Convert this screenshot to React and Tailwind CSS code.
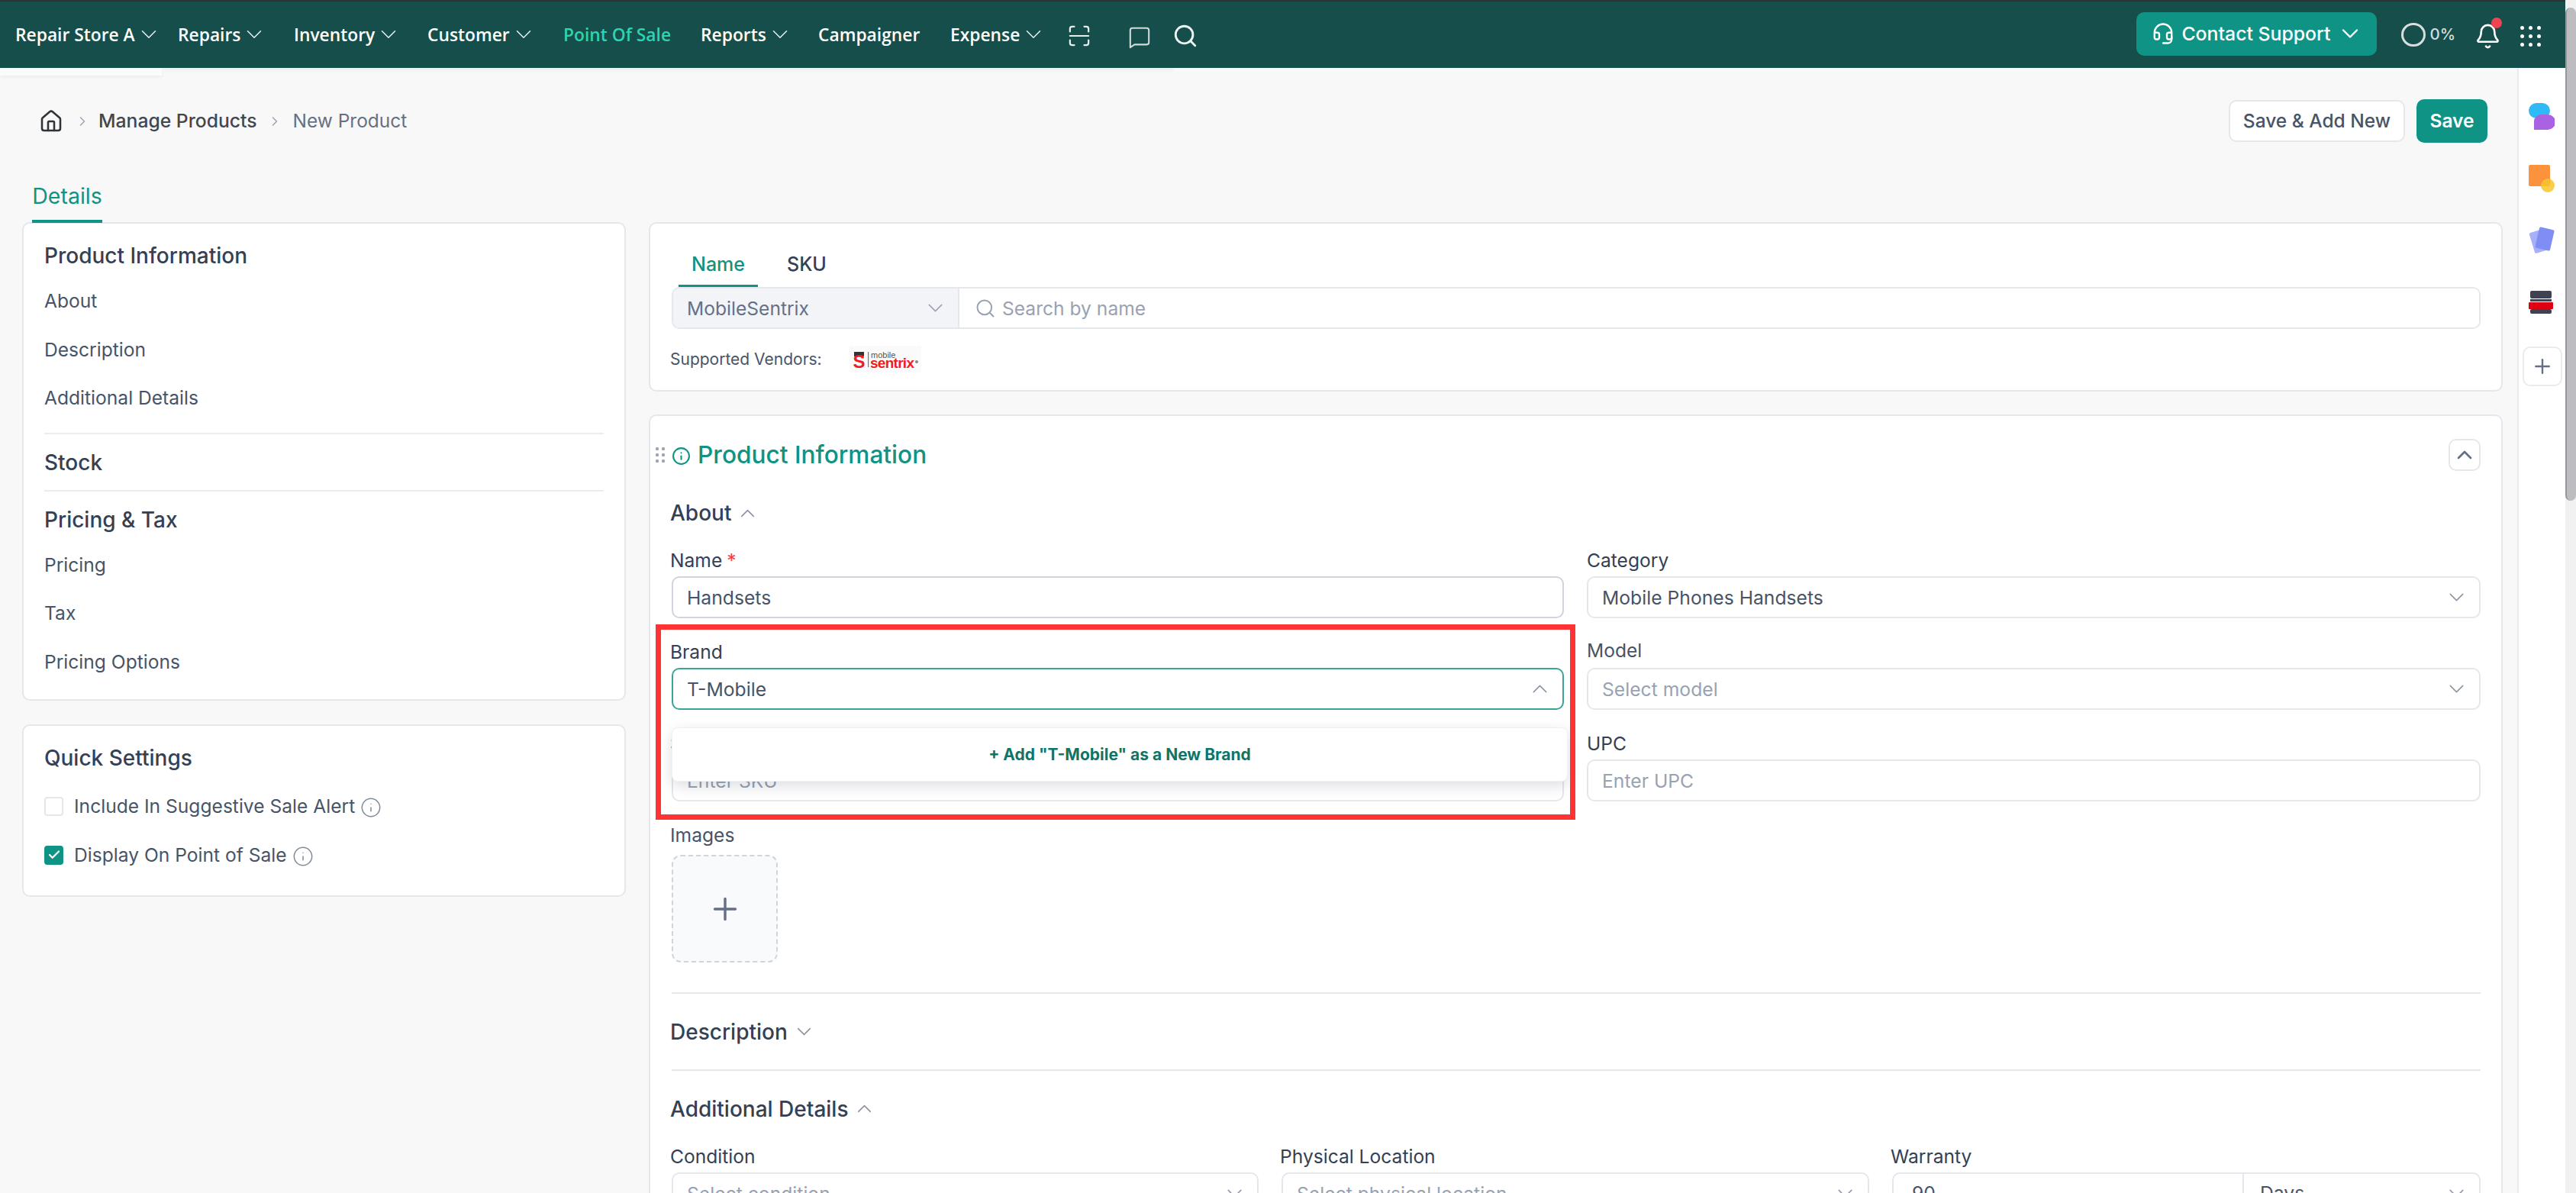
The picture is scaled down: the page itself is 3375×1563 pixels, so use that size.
import React from "react";
import { ChevronDown, ChevronUp, ChevronRight, Search, Bell, Headset, Info, Plus, Check, House } from "lucide-react";

const navItems = [
  { t: "Repair Store A", w: "w-[213px]", c: "text-white", chev: true },
  { t: "Repairs", w: "w-[152px]", c: "text-white", chev: true },
  { t: "Inventory", w: "w-[175px]", c: "text-white", chev: true },
  { t: "Customer", w: "w-[178px]", c: "text-white", chev: true },
  { t: "Point Of Sale", w: "w-[180px]", c: "text-[#2dd4b0]", chev: false },
  { t: "Reports", w: "w-[154px]", c: "text-white", chev: true },
  { t: "Campaigner", w: "w-[173px]", c: "text-white", chev: false },
  { t: "Expense", w: "w-[155px]", c: "text-white", chev: true },
];

function Nav() {
  return (
    <div className="h-[89px] bg-[#154e4b] border-t-2 border-[#2f3433] flex items-center pl-[20px] pr-[32px] shrink-0">
      {navItems.map((n) => (
        <div key={n.t} className={`${n.w} flex items-center shrink-0 mt-[2px]`}>
          <span className={`${n.c} text-[22.8px] font-semibold leading-none [font-family:'Open_Sans',sans-serif]`}>{n.t}</span>
          {n.chev && <ChevronDown className="ml-[1px] text-[#e5efee] -my-[8px] -mt-[10px] shrink-0" size={34} strokeWidth={1.1} />}
        </div>
      ))}
      <svg width="28" height="28" viewBox="0 0 30 30" fill="none" stroke="#e6eeed" strokeWidth="2.4" strokeLinecap="round" className="shrink-0 mt-[3px]">
        <path d="M2 9V5a3 3 0 0 1 3-3h3M22 2h3a3 3 0 0 1 3 3v4M28 21v4a3 3 0 0 1-3 3h-3M8 28H5a3 3 0 0 1-3-3v-4M2 15h26" />
      </svg>
      <svg width="30" height="30" viewBox="0 0 32 32" fill="none" stroke="#cfdcda" strokeWidth="2.2" strokeLinejoin="round" className="ml-[50px] shrink-0 mt-[7px]">
        <path d="M3 6a3 3 0 0 1 3-3h20a3 3 0 0 1 3 3v17a3 3 0 0 1-3 3H9l-6 4z" />
      </svg>
      <Search className="ml-[28px] text-[#eef4f3] mt-[3px] shrink-0" size={34} strokeWidth={2} />
      <div className="ml-auto flex items-center">
        <div className="w-[315px] h-[57px] rounded-[10px] bg-[#0e9384] flex items-center pl-[20px] -mt-[3px]">
          <Headset size={30} strokeWidth={1.9} className="text-white shrink-0" />
          <span className="ml-[9px] text-[24.8px] font-medium text-white leading-none">Contact Support</span>
          <ChevronDown size={36} strokeWidth={1.6} className="ml-[7px] text-white shrink-0" />
        </div>
        <div className="ml-[32px] w-[32px] h-[31px] rounded-full border-[3px] border-[#d8dedd]" />
        <span className="ml-[5px] text-[20.5px] font-medium text-[#d4dedc] leading-none -mt-[1px]">0%</span>
        <div className="ml-[25px] relative mt-[4px]">
          <Bell size={35} strokeWidth={1.8} className="text-white" />
          <div className="absolute -top-[7px] -right-[1px] w-[14px] h-[14px] rounded-full bg-[#f04452]" />
        </div>
        <div className="ml-[25px] grid grid-cols-3 gap-x-[6px] gap-y-[6px] mt-[4px]">
          {[1, 2, 3, 4, 5, 6, 7, 8, 9].map((i) => (
            <div key={i} className="w-[5px] h-[5px] rounded-full bg-white" />
          ))}
        </div>
      </div>
    </div>
  );
}

function Breadcrumb() {
  return (
    <div className="mt-[41px] h-[57px] pl-[51px] pr-[39px] flex items-center shrink-0">
      <House size={32} strokeWidth={1.9} className="text-[#2f3237]" />
      <ChevronRight size={20} strokeWidth={1.7} className="ml-[15px] text-[#98a2b3]" />
      <span className="ml-[11px] text-[24.7px] font-medium text-[#414750] leading-none">Manage Products</span>
      <ChevronRight size={20} strokeWidth={1.7} className="ml-[14px] text-[#98a2b3]" />
      <span className="ml-[13px] text-[24.5px] text-[#667085] leading-none">New Product</span>
      <div className="ml-auto flex items-center">
        <div className="w-[231px] h-[55px] rounded-[10px] bg-white border-2 border-[#e4e7ec] flex items-center justify-center text-[24.5px] font-medium text-[#475467] leading-none">Save &amp; Add New</div>
        <div className="ml-[15px] w-[93px] h-[57px] rounded-[10px] bg-[#0e9384] flex items-center justify-center text-[24.5px] font-semibold text-white leading-none">Save</div>
      </div>
    </div>
  );
}

function SideItem({ children }) {
  return <div className="h-[63.5px] pt-[2px] flex items-center text-[24.6px] text-[#475467] leading-none">{children}</div>;
}

function SideTitle({ children, className }) {
  return <div className={`flex items-center text-[28px] font-medium text-[#344054] leading-none ${className}`}>{children}</div>;
}

function Sidebar() {
  return (
    <div className="w-[791px] shrink-0 flex flex-col">
      <div className="h-[627px] rounded-[10px] bg-white border-2 border-[#e4e7ec] px-[27px]">
        <SideTitle className="h-[69px] pt-[14px]">Product Information</SideTitle>
        <SideItem>About</SideItem>
        <SideItem>Description</SideItem>
        <SideItem>Additional Details</SideItem>
        <div className="mt-[14px] h-[2px] bg-[#eaecf0]" />
        <SideTitle className="h-[73px] pt-[2px]">Stock</SideTitle>
        <div className="h-[2px] bg-[#eaecf0]" />
        <SideTitle className="h-[64px] pt-[10px]">Pricing &amp; Tax</SideTitle>
        <SideItem>Pricing</SideItem>
        <SideItem>Tax</SideItem>
        <SideItem>Pricing Options</SideItem>
      </div>
      <div className="mt-[31px] h-[226px] rounded-[10px] bg-white border-2 border-[#e4e7ec] px-[27px]">
        <SideTitle className="h-[73px] pt-[11px]">Quick Settings</SideTitle>
        <div className="h-[64px] flex items-center">
          <div className="w-[25px] h-[25px] rounded-[4px] border-2 border-[#e4e7ec] bg-white shrink-0" />
          <span className="ml-[14px] text-[24.6px] text-[#475467] leading-none">Include In Suggestive Sale Alert</span>
          <Info size={28} strokeWidth={1.3} className="ml-[7px] text-[#818a98] mt-[3px]" />
        </div>
        <div className="h-[64px] flex items-center">
          <div className="w-[25px] h-[25px] rounded-[4px] bg-[#0e9384] flex items-center justify-center shrink-0">
            <Check size={18} strokeWidth={3} className="text-white" />
          </div>
          <span className="ml-[14px] text-[24.6px] text-[#475467] leading-none">Display On Point of Sale</span>
          <Info size={28} strokeWidth={1.3} className="ml-[7px] text-[#818a98] mt-[3px]" />
        </div>
      </div>
    </div>
  );
}

function VendorLogo() {
  return (
    <svg width="94" height="35" viewBox="0 0 94 35" className="ml-[36px] shrink-0 bg-[#fafafa]">
      <rect x="6" y="8" width="13" height="6" fill="#333" />
      <text x="4.5" y="29" fontSize="24" fontWeight="700" fill="#f01c24" fontFamily="Liberation Sans">S</text>
      <rect x="24" y="8" width="1.2" height="20" fill="#777" />
      <text x="28" y="16" fontSize="11" fill="#555" fontFamily="Liberation Sans">mobile</text>
      <text x="27" y="29" fontSize="19" fontWeight="700" fill="#f01c24" textLength="58" fontFamily="Liberation Sans">sentrix</text>
      <circle cx="88" cy="21" r="2" fill="#888" />
    </svg>
  );
}

function Field({ label, required, labelClass = "", children, className = "" }) {
  return (
    <div className={`flex flex-col min-w-0 relative ${className}`}>
      <div className={`h-[42px] flex items-center text-[24.6px] text-[#344054] leading-none ${labelClass}`}>
        {label}
        {required && <span className="ml-[6px] text-[#f04438]">*</span>}
      </div>
      {children}
    </div>
  );
}

function Box({ value, placeholder, chev = false, focused = false, up = false, bold = false }) {
  return (
    <div className={`h-[55px] rounded-[10px] bg-white flex items-center pl-[18px] pr-[13px] border-2 ${focused ? "border-[#3aa595]" : bold ? "border-[#d0d5dd]" : "border-[#e4e7ec]"}`}>
      <span className={`text-[24.7px] leading-none mt-[1px] ${value ? "text-[#475467]" : "text-[#98a2b3]"}`}>{value || placeholder}</span>
      {chev && !up && <ChevronDown size={33} strokeWidth={1.05} className="ml-auto text-[#8a93a3] shrink-0" />}
      {up && <ChevronUp size={33} strokeWidth={1.05} className="ml-auto text-[#8a93a3] shrink-0" />}
    </div>
  );
}

function SectionHead({ children, h, up, extra = "" }) {
  return (
    <div className={`flex items-center text-[28px] font-medium text-[#344054] leading-none ${h} ${extra}`}>
      {children}
      {up ? (
        <ChevronUp size={31} strokeWidth={1.2} className="ml-[6px] text-[#8a93a3] shrink-0" />
      ) : (
        <ChevronDown size={31} strokeWidth={1.2} className="ml-[6px] text-[#8a93a3] shrink-0" />
      )}
    </div>
  );
}

function MainCol() {
  return (
    <div className="w-[2429px] shrink-0 flex flex-col">
      <div className="h-[222px] rounded-[10px] bg-white border-2 border-[#e4e7ec]">
        <div className="flex h-[83px] pl-[37px]">
          <div className="w-[104px] h-[83px] pt-[26px] border-b-[3px] border-[#0e9384] flex items-center justify-center text-[25px] font-medium text-[#0e9384] leading-none">Name</div>
          <div className="ml-[38px] pt-[26px] pb-[3px] flex items-center text-[25px] font-medium text-[#344054] leading-none">SKU</div>
        </div>
        <div className="ml-[28px] w-[2370px] h-[55px] rounded-[10px] border-2 border-[#e4e7ec] flex overflow-hidden">
          <div className="w-[375px] bg-[#f2f4f7] border-r-2 border-[#e4e7ec] flex items-center pl-[18px] pr-[13px]">
            <span className="text-[24.6px] text-[#667085] leading-none mt-[1px]">MobileSentrix</span>
            <ChevronDown size={33} strokeWidth={1.05} className="ml-auto text-[#98a2b3] shrink-0" />
          </div>
          <div className="flex-1 flex items-center pl-[20px] bg-white">
            <Search size={28} strokeWidth={1.7} className="text-[#98a2b3]" />
            <span className="ml-[8px] text-[24.6px] text-[#98a2b3] leading-none mt-[1px]">Search by name</span>
          </div>
        </div>
        <div className="mt-[22px] ml-[26px] h-[35px] flex items-center">
          <span className="text-[21px] text-[#475467] leading-none">Supported Vendors:</span>
          <VendorLogo />
        </div>
      </div>

      <div className="mt-[30px] rounded-t-[10px] bg-white border-2 border-b-0 border-[#e4e7ec] pl-[28px] pr-[27px] h-[1100px]">
        <div className="h-[102px] flex items-center -ml-[21px]">
          <svg width="12" height="20" viewBox="0 0 12 20" fill="#98a2b3" className="shrink-0">
            <rect x="0" y="0" width="4" height="4" rx="1.5" /><rect x="8" y="0" width="4" height="4" rx="1.5" />
            <rect x="0" y="8" width="4" height="4" rx="1.5" /><rect x="8" y="8" width="4" height="4" rx="1.5" />
            <rect x="0" y="16" width="4" height="4" rx="1.5" /><rect x="8" y="16" width="4" height="4" rx="1.5" />
          </svg>
          <Info size={25} strokeWidth={2} className="ml-[9px] text-[#0e9384] mt-[3px]" />
          <span className="ml-[9px] text-[31.6px] font-medium text-[#0e9384] leading-none">Product Information</span>
          <div className="ml-auto w-[42px] h-[42px] rounded-[10px] border-2 border-[#e4e7ec] flex items-center justify-center">
            <ChevronUp size={32} strokeWidth={2} className="text-[#667085]" />
          </div>
        </div>
        <div className="-ml-[2px]">
          <SectionHead h="h-[50px]" up>About</SectionHead>
        </div>
        <div className="mt-[16px] grid grid-cols-[1169px_1171px] gap-x-[30px] gap-y-[23px]">
          <Field label="Name" required labelClass="-ml-[2px]">
            <Box value="Handsets" bold />
          </Field>
          <Field label="Category">
            <Box value="Mobile Phones Handsets" chev />
          </Field>
          <Field label="Brand" labelClass="-ml-[2px]" className="z-10">
            <Box value="T-Mobile" focused up />
            <div className="absolute left-0 top-[120px] w-[1174px] h-[71px] rounded-[8px] bg-white border border-[#f0f1f3] shadow-[0_6px_18px_rgba(16,24,40,0.14)] flex items-center justify-center text-[21px] font-bold text-[#107569] leading-none z-20">
              + Add &quot;T-Mobile&quot; as a New Brand
            </div>
            <div className="absolute -left-[21px] -top-[15px] w-[1205px] h-[256px] border-[7px] border-[#ff3333] z-30 pointer-events-none" />
          </Field>
          <Field label="Model" labelClass="-mt-[4px] h-[46px] text-[#475467]">
            <Box placeholder="Select model" chev />
          </Field>
          <Field label="SKU" labelClass="-ml-[2px]">
            <Box placeholder="Enter SKU" />
          </Field>
          <Field label="UPC">
            <Box placeholder="Enter UPC" />
          </Field>
        </div>
        <div className="mt-[23px] -ml-[2px] h-[42px] flex items-center text-[24.6px] text-[#475467] leading-none">Images</div>
        <div className="mt-[5px] w-[139px] h-[141px] rounded-[12px] border-2 border-dashed border-[#d0d5dd] bg-[#f9fafb] flex items-center justify-center">
          <Plus size={46} strokeWidth={1.8} className="text-[#667085]" />
        </div>
        <div className="mt-[39px] h-[2px] bg-[#e4e7ec]" />
        <div className="-ml-[2px]">
          <SectionHead h="h-[99px]">Description</SectionHead>
        </div>
        <div className="h-[2px] bg-[#e4e7ec]" />
        <div className="-ml-[2px]">
          <SectionHead h="h-[91px]" extra="pt-[8px]" up>Additional Details</SectionHead>
        </div>
        <div className="grid grid-cols-[769px_770px_771px] gap-x-[30px]">
          <Field label="Condition" labelClass="-ml-[2px]">
            <Box placeholder="Select condition" chev />
          </Field>
          <Field label="Physical Location" labelClass="-ml-[2px]">
            <Box placeholder="Select physical location" chev />
          </Field>
          <Field label="Warranty" labelClass="-ml-[2px]">
            <div className="h-[55px] rounded-[10px] bg-white border-2 border-[#e4e7ec] flex">
              <div className="w-[459px] border-r-2 border-[#e4e7ec] flex items-center pl-[24px] text-[24.7px] text-[#475467] leading-none">90</div>
              <div className="flex-1 flex items-center pl-[21px] pr-[13px]">
                <span className="text-[24.7px] text-[#475467] leading-none">Days</span>
                <ChevronDown size={33} strokeWidth={1.05} className="ml-auto text-[#8a93a3] shrink-0" />
              </div>
            </div>
          </Field>
        </div>
      </div>
    </div>
  );
}

function Rail() {
  return (
    <div className="w-[63px] shrink-0 bg-white border-l-2 border-[#e9ebef] flex flex-col items-start pl-[13px] pt-[46px]">
      <svg width="34" height="35" viewBox="0 0 34 35" className="shrink-0">
        <rect x="0" y="0" width="28" height="20" rx="10" fill="#2fb9f6" />
        <path d="M7 24a9 9 0 0 1 9-9h9a9 9 0 0 1 0 20H7z" fill="#a862e2" />
      </svg>
      <svg width="34" height="36" viewBox="0 0 34 36" className="mt-[46px] shrink-0">
        <rect x="0" y="0" width="28" height="28" rx="2" fill="#fb923c" />
        <circle cx="25" cy="27" r="9" fill="#f7c52b" fillOpacity="0.85" />
      </svg>
      <svg width="34" height="36" viewBox="0 0 34 36" className="mt-[45px] shrink-0">
        <rect x="4" y="5" width="20" height="28" rx="2" fill="#a5b0f8" transform="rotate(-17 14 19)" />
        <rect x="11" y="2" width="20" height="28" rx="2" fill="#7f8df5" transform="rotate(13 21 16)" />
      </svg>
      <svg width="32" height="30" viewBox="0 0 32 30" className="mt-[48px] shrink-0">
        <rect x="2" y="0" width="28" height="10" rx="2" fill="#3f4250" />
        <rect x="2" y="11" width="28" height="3" fill="#3f4250" />
        <rect x="0" y="15" width="32" height="9" rx="1" fill="#dc0010" />
        <rect x="2" y="24" width="28" height="6" rx="2" fill="#3f4250" />
      </svg>
      <div className="mt-[43px] -ml-[8px] w-[52px] h-[52px] rounded-[10px] border-2 border-[#e9ebef] bg-white flex items-center justify-center shrink-0">
        <Plus size={30} strokeWidth={1.9} className="text-[#667085]" />
      </div>
    </div>
  );
}

export default function App() {
  return (
    <div className="w-[3375px] h-[1563px] overflow-hidden flex bg-[#f8f8f9] relative [font-family:Inter,sans-serif]">
      <div className="w-[3361px] h-[1563px] flex flex-col shrink-0">
        <Nav />
        <div className="flex flex-1 min-h-0 relative">
          <div className="absolute left-0 top-0 w-[212px] h-[10px] bg-[#fbfbfb] shadow-[0_2px_4px_rgba(0,0,0,0.05)]" />
          <div className="absolute left-[212px] top-0 w-[1326px] h-[6px] bg-gradient-to-b from-[#efefef] to-transparent" />
          <div className="w-[3298px] shrink-0 flex flex-col">
            <Breadcrumb />
            <div className="mt-[40px] ml-[42px] w-[92px] h-[65px] border-b-4 border-[#0e9384] flex items-center justify-center text-[28.5px] text-[#0e9384] leading-none shrink-0 relative z-10">Details</div>
            <div className="-mt-[1px] pl-[29px] flex gap-x-[30px]">
              <Sidebar />
              <MainCol />
            </div>
          </div>
          <Rail />
        </div>
      </div>
      <div className="w-[14px] h-[1563px] shrink-0 bg-[#f1f1f1] pt-[10px]">
        <div className="h-[646px] rounded-full bg-[#bdbdc1] border-l-2 border-[#97979b]" />
      </div>
    </div>
  );
}
